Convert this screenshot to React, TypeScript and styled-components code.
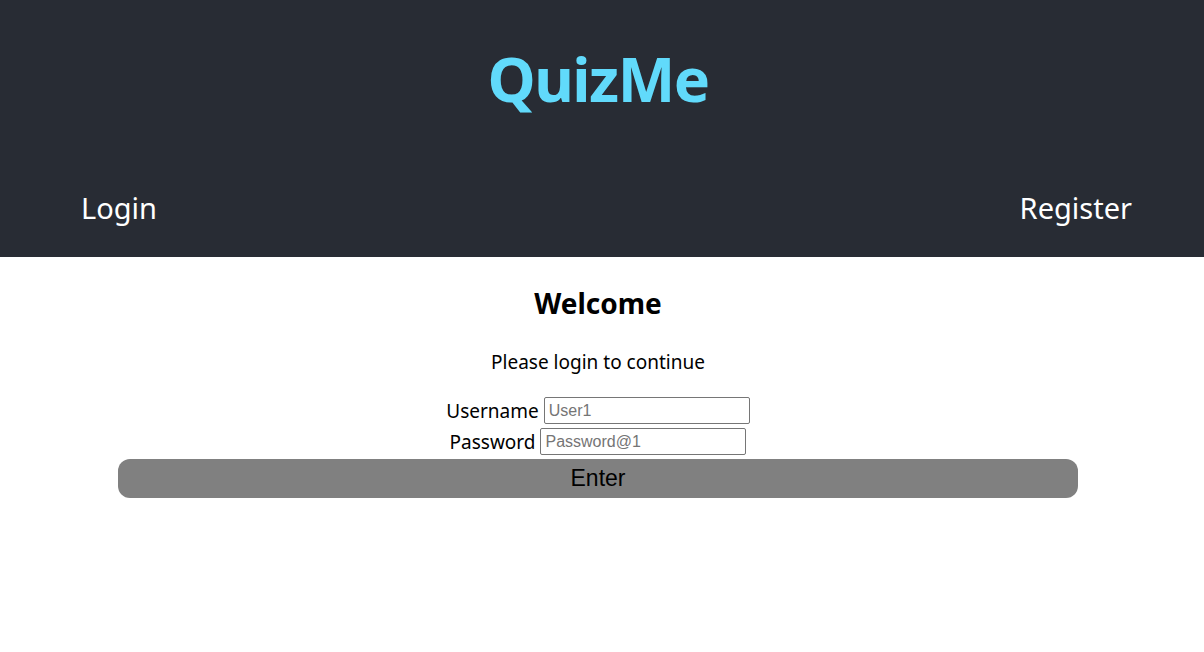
import React from "react";
import styled, { createGlobalStyle } from "styled-components";

const Global = createGlobalStyle`
  html, body { margin: 0; padding: 0; background: #ffffff; }
  body { font-family: "Noto Sans", "Open Sans", sans-serif; color: #000; }
`;

const Header = styled.header`
  background: #282c34;
  height: 257px;
  display: flex;
  flex-direction: column;
  padding-right: 8px;
  box-sizing: border-box;
`;

const Title = styled.h1`
  margin: 0;
  height: 157px;
  display: flex;
  align-items: center;
  justify-content: center;
  color: #61dafb;
  font-size: 61px;
  font-weight: 700;
  letter-spacing: -1.5px;
`;

const Nav = styled.nav`
  display: flex;
  justify-content: space-between;
  align-items: center;
  padding: 0 64px 0 81px;
  height: 100px;
`;

const NavLink = styled.a`
  color: #ffffff;
  font-size: 29px;
  text-decoration: none;
  cursor: pointer;
`;

const Main = styled.main`
  display: flex;
  flex-direction: column;
  align-items: center;
  padding-right: 8px;
`;

const Heading = styled.h2`
  margin: 26px 0 0;
  font-size: 28px;
  font-weight: 700;
  line-height: 40px;
`;

const Lead = styled.p`
  margin: 26px 0 0;
  font-size: 19px;
  line-height: 26px;
`;

const Form = styled.form`
  display: flex;
  flex-direction: column;
  align-items: center;
  margin-top: 20px;
  width: 100%;
`;

const Row = styled.div`
  display: flex;
  align-items: center;
  gap: 5px;
  height: 31px;
`;

const Label = styled.label`
  font-size: 19px;
`;

const Input = styled.input`
  width: 206px;
  height: 27px;
  box-sizing: border-box;
  border: 1px solid #767676;
  border-radius: 2px;
  padding: 1px 4px;
  font-family: "Liberation Sans", Arial, sans-serif;
  font-size: 16px;
  &::placeholder { color: #757575; }
`;

const Button = styled.button`
  width: 960px;
  height: 39px;
  margin-top: 2px;
  background: #808080;
  border: none;
  border-radius: 12px;
  font-family: "Liberation Sans", Arial, sans-serif;
  font-size: 23px;
  color: #000;
  cursor: pointer;
`;

export default function App() {
  return (
    <>
      <Global />
      <Header>
        <Title>QuizMe</Title>
        <Nav>
          <NavLink>Login</NavLink>
          <NavLink>Register</NavLink>
        </Nav>
      </Header>
      <Main>
        <Heading>Welcome</Heading>
        <Lead>Please login to continue</Lead>
        <Form onSubmit={(e) => e.preventDefault()}>
          <Row>
            <Label htmlFor="u">Username</Label>
            <Input id="u" placeholder="User1" />
          </Row>
          <Row>
            <Label htmlFor="p">Password</Label>
            <Input id="p" type="password" placeholder="Password@1" />
          </Row>
          <Button type="submit">Enter</Button>
        </Form>
      </Main>
    </>
  );
}
